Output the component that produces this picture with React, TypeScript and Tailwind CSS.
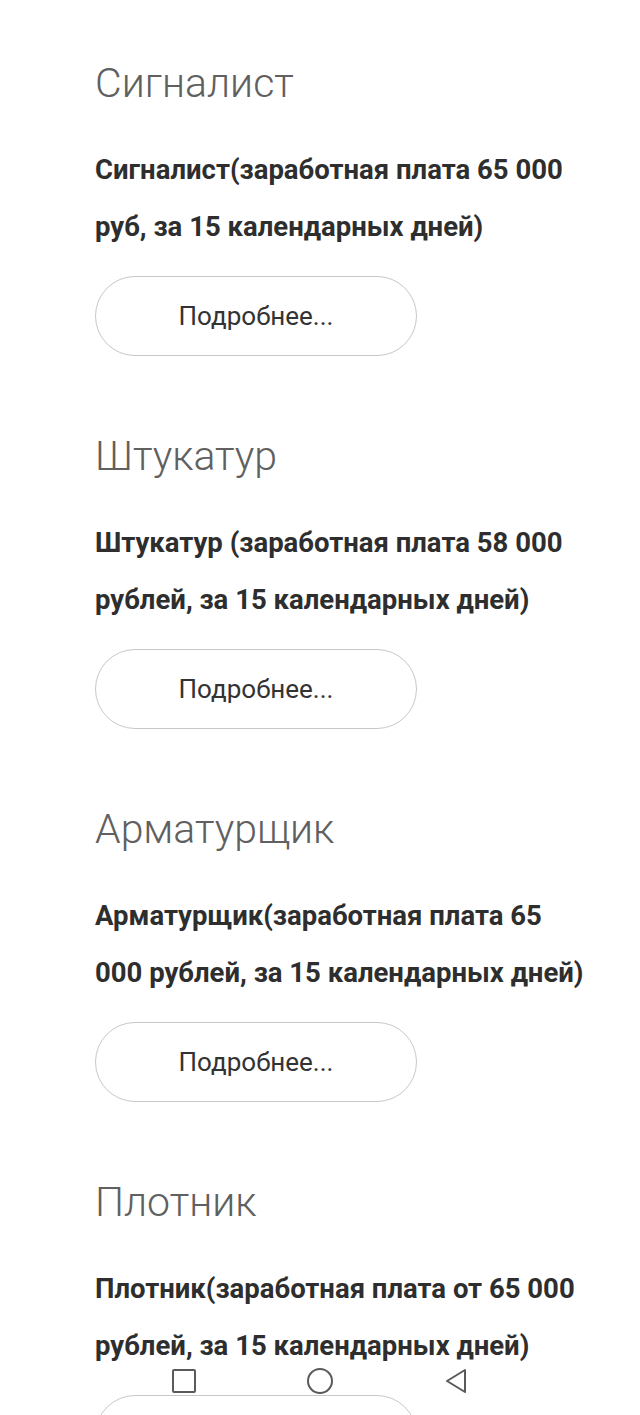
const JOBS = [
  { title: "Сигналист", body: "Сигналист(заработная плата 65 000 руб, за 15 календарных дней)" },
  { title: "Штукатур", body: "Штукатур (заработная плата 58 000 рублей, за 15 календарных дней)" },
  { title: "Арматурщик", body: "Арматурщик(заработная плата 65 000 рублей, за 15 календарных дней)" },
  { title: "Плотник", body: "Плотник(заработная плата от 65 000 рублей, за 15 календарных дней)" },
];

function JobCard({ job }: { job: (typeof JOBS)[0] }) {
  return (
    <section className="mb-[75px]">
      <h2 className="text-[41px] leading-[50px] font-light text-[#606060]">{job.title}</h2>
      <p className="mt-[33px] text-[27.5px] leading-[57px] font-bold text-[#2e2e2e]">{job.body}</p>
      <button className="mt-[21px] w-[322px] h-[80px] rounded-full border-[1.5px] border-[#c8c8c8] bg-white text-[26px] text-[#333]">
        Подробнее...
      </button>
    </section>
  );
}

export default function App() {
  return (
    <div
      className="relative w-[640px] h-[1415px] overflow-hidden bg-white"
      style={{ fontFamily: "Roboto, 'Noto Sans', sans-serif" }}
    >
      <div className="pt-[58px] pl-[95px] pr-[47px]">
        {JOBS.map((j) => (
          <JobCard key={j.title} job={j} />
        ))}
      </div>

      {/* android nav bar */}
      <div className="absolute left-0 right-0 top-[1367px] flex justify-center gap-[108px] text-[#5a5a5a]">
        <svg width="28" height="28" viewBox="0 0 28 28" fill="none" stroke="currentColor" strokeWidth="2">
          <rect x="3" y="3" width="22" height="22" rx="1" />
        </svg>
        <svg width="28" height="28" viewBox="0 0 28 28" fill="none" stroke="currentColor" strokeWidth="2">
          <circle cx="14" cy="14" r="12" />
        </svg>
        <svg width="28" height="28" viewBox="0 0 28 28" fill="none" stroke="currentColor" strokeWidth="2" strokeLinejoin="round">
          <path d="M23 3 L5 14 L23 25 Z" />
        </svg>
      </div>
    </div>
  );
}
